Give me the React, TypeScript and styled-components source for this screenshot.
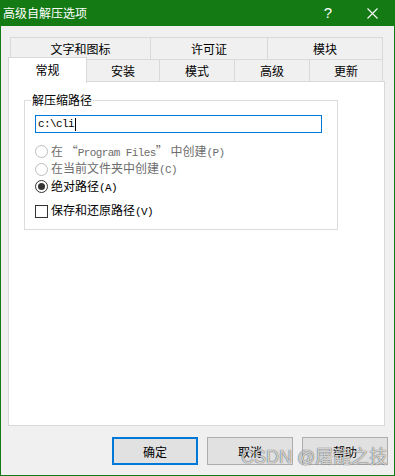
import React from 'react';
import styled, { createGlobalStyle } from 'styled-components';

const GlobalStyle = createGlobalStyle`
  html, body {
    margin: 0;
    padding: 0;
    background: #ffffff;
  }
`;

const green = '#147a14';
const tabBorder = '#d9d9d9';

const Window = styled.div`
  position: relative;
  display: flex;
  flex-direction: column;
  width: 395px;
  height: 476px;
  box-sizing: border-box;
  border: 1px solid ${green};
  border-top: none;
  background: #f0f0f0;
  font-family: "Noto Sans CJK SC", "Liberation Sans", sans-serif;
  font-size: 12px;
  color: #000;
`;

const TitleBar = styled.div`
  display: flex;
  align-items: center;
  height: 26px;
  margin: 0 -1px;
  padding-left: 3px;
  background: ${green};
  color: #fff;
`;

const Title = styled.div`
  flex: 1;
  font-size: 12px;
  line-height: 26px;
`;

const HelpMark = styled.div`
  width: 46px;
  text-align: center;
  font-family: "Liberation Sans", sans-serif;
  font-size: 15px;
  line-height: 26px;
  margin-right: -2px;
`;

const CloseBtn = styled.div`
  display: flex;
  align-items: center;
  justify-content: center;
  width: 46px;
  height: 26px;
`;

const Body = styled.div`
  flex: 1;
  display: flex;
  flex-direction: column;
  padding: 11px 9px 0 7px;
`;

const TabRow = styled.div<{ $indent?: number; $overlap?: boolean }>`
  display: flex;
  align-items: flex-start;
  height: 23px;
  margin-left: ${(p) => p.$indent || 0}px;
  margin-top: ${(p) => (p.$overlap ? -1 : 0)}px;
`;

const Tab = styled.div<{ $w: number; $selected?: boolean }>`
  position: relative;
  box-sizing: border-box;
  width: ${(p) => p.$w}px;
  height: ${(p) => (p.$selected ? 26 : 23)}px;
  margin-top: ${(p) => (p.$selected ? -2 : 0)}px;
  padding-bottom: ${(p) => (p.$selected ? 3 : 0)}px;
  border: 1px solid ${tabBorder};
  border-bottom: ${(p) => (p.$selected ? 'none' : `1px solid ${tabBorder}`)};
  background: ${(p) => (p.$selected ? '#ffffff' : '#f0f0f0')};
  z-index: ${(p) => (p.$selected ? 2 : 0)};
  display: flex;
  align-items: center;
  justify-content: center;
  & + & {
    margin-left: -1px;
  }
`;

const Panel = styled.div`
  position: relative;
  z-index: 1;
  flex: 1;
  margin-top: -1px;
  padding: 18px 46px 0 15px;
  background: #ffffff;
  border: 1px solid ${tabBorder};
`;

const GroupBox = styled.div`
  position: relative;
  width: 314px;
  box-sizing: border-box;
  border: 1px solid #dcdcdc;
  padding: 14px 15px 9px 10px;
`;

const Legend = styled.span`
  position: absolute;
  top: -9px;
  left: 6px;
  padding: 0 1px;
  background: #fff;
  line-height: 16px;
`;

const PathInput = styled.div`
  box-sizing: border-box;
  height: 18px;
  border: 1px solid #0078d7;
  padding-left: 2px;
  display: flex;
  align-items: center;
`;

const Mono = styled.span`
  font-family: "Liberation Mono", "DejaVu Sans Mono", monospace;
  font-size: 11px;
  letter-spacing: -0.6px;
`;

const Caret = styled.span`
  display: inline-block;
  width: 1px;
  height: 13px;
  margin-left: 1px;
  background: #000;
`;

const Options = styled.div`
  margin-top: 10px;
`;

const OptionRow = styled.div<{ $disabled?: boolean; $gap?: number }>`
  display: flex;
  align-items: center;
  height: ${(p) => (p.$gap ? 18 : 17.5)}px;
  margin-top: ${(p) => p.$gap || 0}px;
  color: ${(p) => (p.$disabled ? '#6d6d6d' : '#000')};
  white-space: nowrap;
`;

const Label = styled.span`
  line-height: 16px;
`;

const Radio = styled.span<{ $checked?: boolean; $disabled?: boolean }>`
  position: relative;
  box-sizing: border-box;
  width: 13px;
  height: 13px;
  margin-right: 3px;
  border-radius: 50%;
  border: 1px solid ${(p) => (p.$disabled ? '#bcbcbc' : '#333')};
  background: #fff;
  &::after {
    content: '';
    display: ${(p) => (p.$checked ? 'block' : 'none')};
    position: absolute;
    left: 2px;
    top: 2px;
    width: 7px;
    height: 7px;
    border-radius: 50%;
    background: #333;
  }
`;

const Check = styled.span`
  box-sizing: border-box;
  width: 13px;
  height: 13px;
  margin-right: 3px;
  border: 1px solid #333;
  background: #fff;
`;

const ButtonRow = styled.div`
  display: flex;
  justify-content: flex-end;
  gap: 9px;
  height: 28px;
  margin: 11px -3px 10px 0;
`;

const Button = styled.div<{ $default?: boolean }>`
  box-sizing: border-box;
  width: 86px;
  height: 28px;
  display: flex;
  align-items: center;
  justify-content: center;
  background: #e1e1e1;
  border: ${(p) => (p.$default ? '2px solid #0078d7' : '1px solid #adadad')};
`;

const Watermark = styled.div`
  position: absolute;
  left: 240px;
  top: 446px;
  font-family: "Liberation Sans", "Noto Sans CJK SC", sans-serif;
  font-size: 18px;
  line-height: 22px;
  color: rgba(255, 255, 255, 0.75);
  text-shadow: 0 0 1px rgba(0, 0, 0, 0.55), 0 0 1px rgba(0, 0, 0, 0.45);
  white-space: nowrap;
  z-index: 5;
`;

const topTabs = [
  { label: '文字和图标', w: 141 },
  { label: '许可证', w: 118 },
  { label: '模块', w: 116 },
];

const bottomTabs = [
  { label: '常规', w: 79, selected: true },
  { label: '安装', w: 74 },
  { label: '模式', w: 76 },
  { label: '高级', w: 76 },
  { label: '更新', w: 74 },
];

const App: React.FC = () => {
  return (
    <>
      <GlobalStyle />
      <Window>
        <TitleBar>
          <Title>高级自解压选项</Title>
          <HelpMark>?</HelpMark>
          <CloseBtn>
            <svg width="11" height="11" viewBox="0 0 11 11">
              <path d="M0.5 0.5 L10.5 10.5 M10.5 0.5 L0.5 10.5" stroke="#fff" strokeWidth="1.1" />
            </svg>
          </CloseBtn>
        </TitleBar>
        <Body>
          <TabRow $indent={2}>
            {topTabs.map((t) => (
              <Tab key={t.label} $w={t.w}>{t.label}</Tab>
            ))}
          </TabRow>
          <TabRow $overlap>
            {bottomTabs.map((t) => (
              <Tab key={t.label} $w={t.w} $selected={t.selected}>{t.label}</Tab>
            ))}
          </TabRow>
          <Panel>
            <GroupBox>
              <Legend>解压缩路径</Legend>
              <PathInput>
                <Mono>c:\cli</Mono>
                <Caret />
              </PathInput>
              <Options>
                <OptionRow $disabled>
                  <Radio $disabled />
                  <Label>在 “<Mono>Program Files</Mono>” 中创建<Mono>(P)</Mono></Label>
                </OptionRow>
                <OptionRow $disabled>
                  <Radio $disabled />
                  <Label>在当前文件夹中创建<Mono>(C)</Mono></Label>
                </OptionRow>
                <OptionRow>
                  <Radio $checked />
                  <Label>绝对路径<Mono>(A)</Mono></Label>
                </OptionRow>
                <OptionRow $gap={6.5}>
                  <Check />
                  <Label>保存和还原路径<Mono>(V)</Mono></Label>
                </OptionRow>
              </Options>
            </GroupBox>
          </Panel>
          <ButtonRow>
            <Button $default>确定</Button>
            <Button>取消</Button>
            <Button>帮助</Button>
          </ButtonRow>
        </Body>
        <Watermark>CSDN @屠龍之技</Watermark>
      </Window>
    </>
  );
};

export default App;
